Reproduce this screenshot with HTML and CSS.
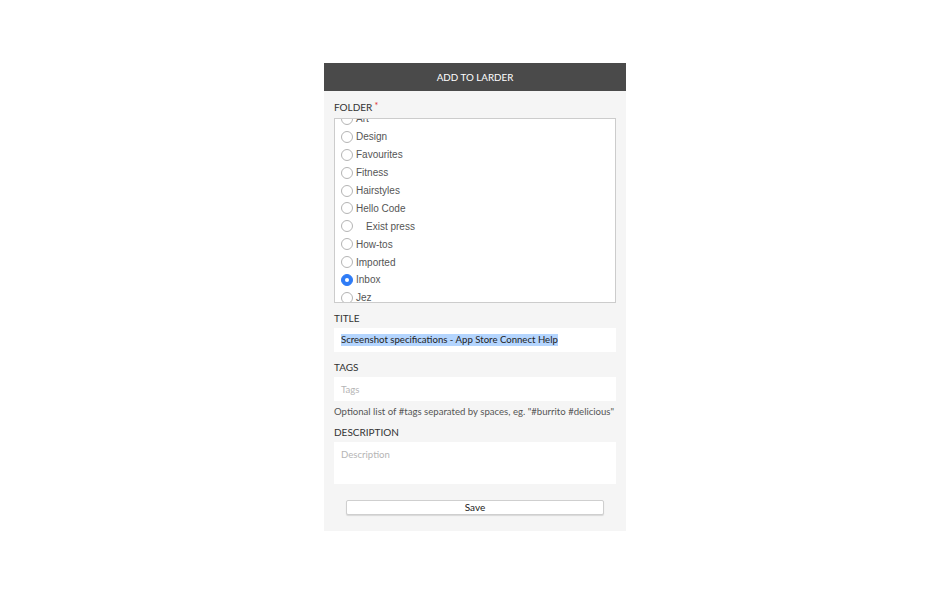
FILE: index.html
```html
<!DOCTYPE html>
<html>
<head>
<meta charset="utf-8">
<link rel="stylesheet" href="styles.css">
</head>
<body>
<div class="panel">
  <div class="header">ADD TO LARDER</div>
  <div class="content">
    <div class="label first">FOLDER<span class="req">*</span></div>
    <div class="folders">
      <div class="list">
        <div class="item"><span class="radio"></span><span class="name">Art</span></div>
        <div class="item"><span class="radio"></span><span class="name">Design</span></div>
        <div class="item"><span class="radio"></span><span class="name">Favourites</span></div>
        <div class="item"><span class="radio"></span><span class="name">Fitness</span></div>
        <div class="item"><span class="radio"></span><span class="name">Hairstyles</span></div>
        <div class="item"><span class="radio"></span><span class="name">Hello Code</span></div>
        <div class="item"><span class="radio"></span><span class="name sub">Exist press</span></div>
        <div class="item"><span class="radio"></span><span class="name">How-tos</span></div>
        <div class="item"><span class="radio"></span><span class="name">Imported</span></div>
        <div class="item"><span class="radio checked"></span><span class="name">Inbox</span></div>
        <div class="item"><span class="radio"></span><span class="name">Jez</span></div>
      </div>
    </div>
    <div class="label">TITLE</div>
    <div class="field"><span class="selected">Screenshot specifications - App Store Connect Help</span></div>
    <div class="label">TAGS</div>
    <div class="field placeholder">Tags</div>
    <div class="help">Optional list of #tags separated by spaces, eg. "#burrito #delicious"</div>
    <div class="label desc">DESCRIPTION</div>
    <div class="field area placeholder">Description</div>
    <div class="actions"><button class="save">Save</button></div>
  </div>
</div>
</body>
</html>
```

FILE: styles.css
```css
html, body {
  margin: 0;
  padding: 0;
  background: #ffffff;
}
body {
  font-family: Lato, "Liberation Sans", sans-serif;
}
.panel {
  width: 302px;
  margin: 63px auto 0;
  background: #f5f5f5;
}
.header {
  height: 28px;
  line-height: 28px;
  background: #4a4a4a;
  color: #ffffff;
  text-align: center;
  font-size: 9.8px;
}
.content {
  padding: 0 10px 16px;
  display: flex;
  flex-direction: column;
}
.label {
  font-size: 10px;
  line-height: 12px;
  color: #333333;
  margin-top: 9px;
  margin-bottom: 4px;
}
.label.first {
  margin-bottom: 5px;
}
.label.desc {
  margin-top: 8px;
}
.req {
  color: #e02b2b;
  font-size: 9px;
  vertical-align: 2px;
  margin-left: 2px;
}
.folders {
  height: 183px;
  background: #ffffff;
  border: 1px solid #cccccc;
  overflow: hidden;
}
.list {
  margin-top: -9px;
}
.item {
  height: 17.9px;
  display: flex;
  align-items: center;
  font-family: "Liberation Sans", Arial, sans-serif;
  font-size: 10px;
  color: #555555;
}
.radio {
  width: 10px;
  height: 10px;
  border: 1px solid #b4b4b4;
  border-radius: 50%;
  background: #ffffff;
  margin-left: 6px;
  margin-right: 3px;
  box-sizing: content-box;
  flex: none;
  display: flex;
  align-items: center;
  justify-content: center;
}
.radio.checked {
  background: #2f7cf6;
  border-color: #2f7cf6;
}
.radio.checked::after {
  content: "";
  width: 4px;
  height: 4px;
  border-radius: 50%;
  background: #ffffff;
}
.name.sub {
  padding-left: 10px;
}
.field {
  height: 24px;
  background: #ffffff;
  padding: 0 7px;
  display: flex;
  align-items: center;
  font-size: 9.6px;
  color: #222222;
  box-sizing: border-box;
}
.selected {
  background: #b4d5fe;
  line-height: 12px;
}
.placeholder {
  color: #b5b5b5;
}
.area {
  height: 42px;
  align-items: flex-start;
  padding-top: 7px;
}
.help {
  font-size: 9.6px;
  line-height: 12px;
  color: #555555;
  margin-top: 5px;
  white-space: nowrap;
}
.actions {
  padding: 16px 12px 0 12px;
  display: flex;
}
.save {
  flex: 1;
  height: 15px;
  padding: 0;
  background: #ffffff;
  border: 1px solid #cfcfcf;
  border-radius: 2px;
  box-shadow: 0 1px 1px rgba(0, 0, 0, 0.12);
  font-family: Lato, "Liberation Sans", sans-serif;
  font-size: 10px;
  line-height: 13px;
  color: #222222;
}
```
